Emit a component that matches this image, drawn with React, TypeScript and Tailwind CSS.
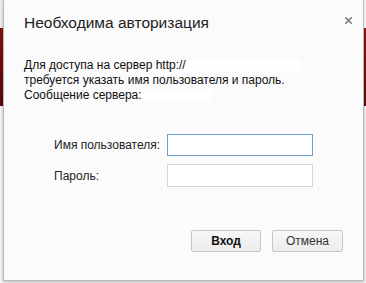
import React from 'react';
import { X } from 'lucide-react';

const App: React.FC = () => {
  return (
    <div className="w-[366px] h-[283px] bg-[#f3f3f3] flex overflow-hidden font-['Liberation_Sans',Arial,sans-serif]">
      <div className="w-[3px] flex flex-col">
        <div className="h-[28px] bg-[#eeeeee]" />
        <div className="h-[78px] bg-gradient-to-b from-[#8a0c0c] to-[#5a0808]" />
      </div>

      <div className="w-[361px] h-[281px] bg-[#fbfbfb] border border-t-0 border-[#b9b9b9] shadow-[0_1px_3px_rgba(0,0,0,0.25)] flex flex-col">
        <div className="flex items-start justify-between pl-[20px] pr-[9px] pt-[12px]">
          <h1 className="text-[15.5px] leading-[22px] text-[#222222]">Необходима авторизация</h1>
          <button className="mt-[3px] text-[#7a7a7a]">
            <X size={11} strokeWidth={3.5} />
          </button>
        </div>

        <div className="pl-[20px] mt-[24px] text-[12px] leading-[15px] text-[#111111]">
          <p>
            Для доступа на сервер http://
            <span className="inline-block w-[115px] h-[11px] bg-white align-middle" />
          </p>
          <p>требуется указать имя пользователя и пароль.</p>
          <p>
            Сообщение сервера:
            <span className="inline-block w-[70px] h-[11px] bg-white align-middle" />
          </p>
        </div>

        <div className="mt-[31px] grid grid-cols-[113px_146px] gap-y-[8px] pl-[50px] text-[12px] text-[#222222]">
          <label className="flex items-center h-[22px]">Имя пользователя:</label>
          <input className="h-[22px] bg-white border border-[#6f9fcf] outline-none" />
          <label className="flex items-center h-[23px]">Пароль:</label>
          <input type="password" className="h-[23px] bg-white border border-[#d6d6d6] outline-none" />
        </div>

        <div className="mt-auto mb-[28px] flex justify-end gap-[11px] pr-[20px]">
          <button className="w-[70px] h-[22px] rounded-[2px] border border-[#c6c6c6] bg-gradient-to-b from-[#f7f7f7] to-[#ececec] text-[12px] font-bold text-[#111111]">
            Вход
          </button>
          <button className="w-[71px] h-[22px] rounded-[2px] border border-[#c6c6c6] bg-gradient-to-b from-[#f7f7f7] to-[#ececec] text-[12px] text-[#333333]">
            Отмена
          </button>
        </div>
      </div>

      <div className="w-[2px] flex flex-col">
        <div className="h-[28px] bg-[#eeeeee]" />
        <div className="h-[78px] bg-gradient-to-b from-[#8a0c0c] to-[#5a0808]" />
      </div>
    </div>
  );
};

export default App;
